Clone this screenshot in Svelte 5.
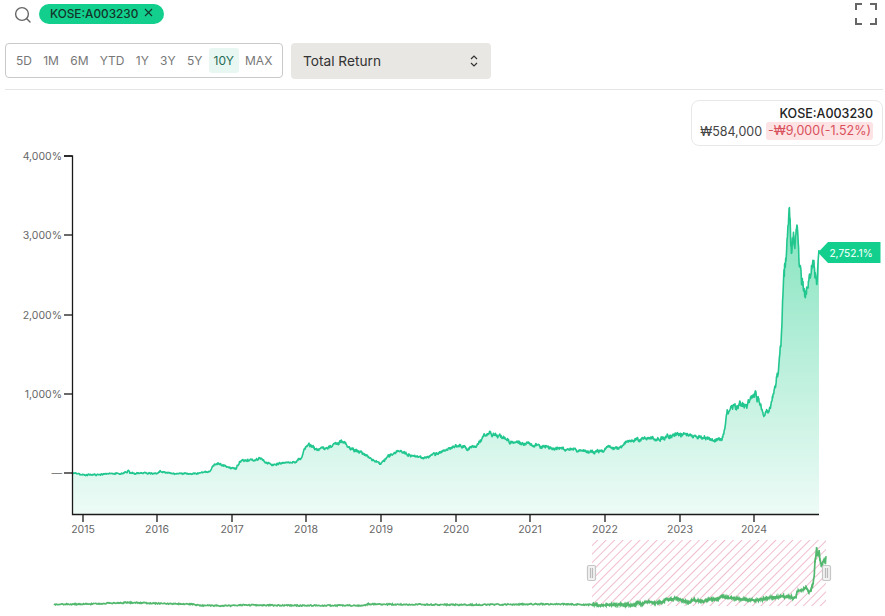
<script>
  const ranges = ['5D', '1M', '6M', 'YTD', '1Y', '3Y', '5Y', '10Y', 'MAX'];
  const active = '10Y';

  const yTicks = [
    { y: 156, label: '4,000%' },
    { y: 235, label: '3,000%' },
    { y: 315, label: '2,000%' },
    { y: 394, label: '1,000%' },
    { y: 473, label: '—' }
  ];
  const years = [
    [83, 2015], [157, 2016], [232, 2017], [306, 2018], [381, 2019],
    [456, 2020], [530, 2021], [605, 2022], [680, 2023], [754, 2024]
  ];

  // hand-read shape of the return line, in chart pixels
  const shape = [
    [72, 473], [80, 474.5], [92, 475], [105, 474], [120, 473.5], [127, 472], [128.5, 469], [130, 473],
    [157, 473.5], [160, 471], [170, 473.5], [195, 473.5], [208, 472], [211, 470], [214, 465], [218, 463.5],
    [222, 465], [228, 467], [236, 469], [240, 461], [247, 460], [257, 459.5], [260, 458], [266, 462],
    [273, 465], [285, 462.5], [296, 461], [301, 459], [304, 449], [309, 445.5], [316, 449], [325, 449],
    [332, 446], [342, 441], [350, 448], [360, 452], [370, 458], [381, 464], [388, 456], [398, 451],
    [410, 455], [425, 458], [438, 453], [450, 448], [459, 444], [468, 449], [476, 446], [484, 436],
    [490, 433], [500, 436], [510, 442], [530, 444], [550, 449], [570, 449], [590, 452], [604, 451],
    [608, 446], [618, 449], [628, 442], [645, 438], [660, 439], [678, 434], [695, 436], [712, 440],
    [722, 440], [725, 428], [727, 411], [735, 406], [745, 405], [750, 400], [755, 393], [760, 405],
    [764, 414], [769, 410], [774, 392], [778, 370], [781, 345], [783, 292], [785, 265], [787, 245],
    [789, 208], [790.5, 232], [791.5, 252], [794, 238], [796, 240], [797, 221], [799, 262], [801, 276],
    [803, 290], [805, 298], [808, 283], [811, 270], [813, 263], [815, 272], [817, 284], [818, 262], [819, 250]
  ];

  // seeded so the jitter is the same on every load
  let seed = 4211;
  function rnd() {
    seed = (seed * 16807) % 2147483647;
    return seed / 2147483647 - 0.5;
  }

  function yAt(x) {
    for (let i = 1; i < shape.length; i++) {
      if (x <= shape[i][0]) {
        const [x0, y0] = shape[i - 1];
        const [x1, y1] = shape[i];
        return y0 + ((y1 - y0) * (x - x0)) / (x1 - x0);
      }
    }
    return shape[shape.length - 1][1];
  }

  const series = [];
  let drift = 0;
  for (let x = 72; x <= 819; x += 0.34) {
    const base = yAt(x);
    const amp = 1 + Math.max(473 - base, 0) * 0.05;
    drift = drift * 0.6 + rnd() * amp;
    series.push([x, x > 817.5 ? base : base + drift + rnd() * amp * 0.5]);
  }
  series.push([819, 250]);

  const line = series.map((p) => p[0].toFixed(1) + ',' + p[1].toFixed(1)).join(' ');
  const area = `72,514 ${line} 819,514`;

  // navigator: long history on the left, the selected window squeezed on the right
  const history = [
    [54, 604.3], [90, 604], [115, 603], [128, 602.5], [160, 603.5], [180, 603.8], [192, 604.2],
    [200, 605.5], [230, 605.8], [240, 605], [300, 605.5], [365, 605.5], [368, 604.2], [420, 604.5],
    [470, 604.8], [520, 604.3], [560, 604], [590, 604.8]
  ];
  function miniHistory() {
    const out = [];
    for (let i = 1; i < history.length; i++) {
      const [x0, y0] = history[i - 1];
      const [x1, y1] = history[i];
      for (let x = x0; x < x1; x += 0.7) {
        out.push(x.toFixed(1) + ',' + (y0 + ((y1 - y0) * (x - x0)) / (x1 - x0) + rnd() * 1.2).toFixed(1));
      }
    }
    return out;
  }
  const miniPts = miniHistory();
  for (const [x, y] of series) {
    const mx = 592 + ((x - 72) / 747) * 234;
    const my = 604.8 + (y - 473) * 0.218 + rnd() * 2;
    miniPts.push(mx.toFixed(1) + ',' + my.toFixed(1));
  }
  const miniLine = miniPts.join(' ');
</script>

<div class="page">
  <div class="top">
    <svg class="search" width="18" height="18" viewBox="0 0 18 18" fill="none" stroke="#666" stroke-width="1.4">
      <circle cx="8" cy="8" r="6.4" />
      <path d="M12.8 12.8 16 16" stroke-linecap="round" />
    </svg>
    <div class="pill">
      <span>KOSE:A003230</span>
      <svg class="close" width="9" height="9" viewBox="0 0 9 9" stroke="#14342a" stroke-width="1.1">
        <path d="M1 1l7 7M8 1 1 8" />
      </svg>
    </div>
    <svg class="expand" width="22" height="22" viewBox="0 0 22 22" fill="none" stroke="#666" stroke-width="2">
      <path d="M1 7V1h6M15 1h6v6M21 15v6h-6M7 21H1v-6" />
    </svg>
  </div>

  <div class="controls">
    <div class="ranges">
      {#each ranges as r}
        <span class="range" class:on={r === active}>{r}</span>
      {/each}
    </div>
    <div class="select">
      <span>Total Return</span>
      <svg width="10" height="14" viewBox="0 0 10 14" fill="none" stroke="#333" stroke-width="1.2">
        <path d="M2 5l3-3 3 3M2 9l3 3 3-3" />
      </svg>
    </div>
  </div>

  <div class="chart">
    <svg class="plot" width="885" height="616" viewBox="0 0 885 616">
      <defs>
        <linearGradient id="fill" gradientUnits="userSpaceOnUse" x1="0" y1="207" x2="0" y2="514">
          <stop offset="0" stop-color="#7fe3bd" />
          <stop offset="0.45" stop-color="#b4eed8" />
          <stop offset="1" stop-color="#edfbf6" />
        </linearGradient>
        <pattern id="hatch" width="6" height="6" patternUnits="userSpaceOnUse" patternTransform="rotate(45)">
          <line x1="0" y1="0" x2="0" y2="6" stroke="#e89ab3" stroke-width="1.3" />
        </pattern>
      </defs>

      <polygon points={area} fill="url(#fill)" />
      <polyline points={line} fill="none" stroke="#22c78f" stroke-width="1.6" stroke-linejoin="round" />

      <path class="axis" d="M64 156H72.5V514.5H819" />
      {#each yTicks as t}
        <line class="axis" x1="64" x2="72" y1={t.y} y2={t.y} />
        <text class="tick" x="62" y={t.y + 4} text-anchor="end">{t.label}</text>
      {/each}
      {#each years as [x, label]}
        <line class="axis" x1={x} x2={x} y1="514" y2="522" />
        <text class="tick" x={x} y="533" text-anchor="middle">{label}</text>
      {/each}

      <path d="M818 252.5l10-10.5h52.500v21h-52.500z" fill="#12cf8d" />
      <text class="tag" x="851" y="256.500" text-anchor="middle">2,752.1%</text>

      <rect x="592" y="540" width="234" height="66" fill="url(#hatch)" />
      <polyline points={miniLine} fill="none" stroke="#52b86e" stroke-width="1.7" />
      <g class="handle">
        <rect x="587.5" y="565.5" width="8" height="15" rx="1.5" />
        <path d="M590.5 568v10M592.5 568v10" />
      </g>
      <g class="handle">
        <rect x="822.5" y="565.5" width="8" height="15" rx="1.5" />
        <path d="M825.5 568v10M827.5 568v10" />
      </g>
    </svg>

    <div class="legend">
      <div class="name">KOSE:A003230</div>
      <div class="quote">
        <span>₩584,000</span>
        <span class="change">-₩9,000(-1.52%)</span>
      </div>
    </div>
  </div>
</div>

<style>
  :global(body) {
    margin: 0;
    background: #fff;
  }
  .page {
    width: 885px;
    height: 616px;
    overflow: hidden;
    font-family: Inter, "Liberation Sans", sans-serif;
    color: #222;
  }
  .top {
    display: flex;
    align-items: center;
    height: 28px;
    padding: 0 8px 0 14px;
  }
  .search {
    margin-right: 7px;
    margin-top: 2px;
  }
  .pill {
    display: flex;
    align-items: center;
    gap: 6px;
    height: 20px;
    padding: 0 11px 0 11px;
    border-radius: 10px;
    background: #12cf8d;
    font-size: 11.8px;
    font-weight: 500;
    color: #14342a;
  }
  .close {
    margin-top: -3px;
  }
  .expand {
    margin-left: auto;
  }
  .controls {
    display: flex;
    align-items: center;
    gap: 8px;
    height: 62px;
    margin: 0 2px 0 5px;
    padding-top: 4px;
    box-sizing: border-box;
    border-bottom: 1px solid #e5e5e5;
  }
  .ranges {
    display: flex;
    align-items: center;
    box-sizing: border-box;
    width: 278px;
    height: 35px;
    padding: 0 5px;
    border: 1px solid #c9c9c9;
    border-radius: 4px;
  }
  .range {
    padding: 0 5px;
    height: 25px;
    line-height: 25px;
    margin-right: 1.25px;
    border-radius: 3px;
    font-size: 12px;
    color: #777;
  }
  .range.on {
    background: #e9f7f2;
    color: #1f6a52;
  }
  .select {
    display: flex;
    align-items: center;
    justify-content: space-between;
    box-sizing: border-box;
    width: 200px;
    height: 36px;
    padding: 1px 12px 0;
    border-radius: 4px;
    background: #e8e7e3;
    font-size: 13.7px;
    color: #333;
  }
  .chart {
    position: relative;
    height: 526px;
  }
  .plot {
    position: absolute;
    left: 0;
    top: -90px;
  }
  .axis {
    fill: none;
    stroke: #1a1a1a;
    stroke-width: 1.3;
  }
  .tick {
    font-size: 10.5px;
    fill: #666;
  }
  .tag {
    font-size: 10px;
    font-weight: 500;
    fill: #e6fff5;
  }
  .handle rect {
    fill: #f2f2f2;
    stroke: #c6c6c6;
    stroke-width: 1.2;
  }
  .handle path {
    stroke: #bbb;
    stroke-width: 1.2;
  }
  .legend {
    position: absolute;
    right: 2px;
    top: 10px;
    box-sizing: border-box;
    width: 192px;
    height: 46px;
    padding: 5px 9px;
    border: 1px solid #e8e8e8;
    border-radius: 8px;
    background: #fff;
    text-align: right;
    font-size: 12.5px;
    white-space: nowrap;
  }
  .name {
    font-weight: 500;
    color: #222;
    line-height: 15px;
  }
  .quote {
    display: flex;
    justify-content: flex-end;
    align-items: center;
    gap: 4px;
    margin-top: 1px;
    color: #444;
  }
  .change {
    padding: 0 2px;
    line-height: 18px;
    border-radius: 3px;
    background: #fde3e3;
    color: #d9505c;
  }
</style>
